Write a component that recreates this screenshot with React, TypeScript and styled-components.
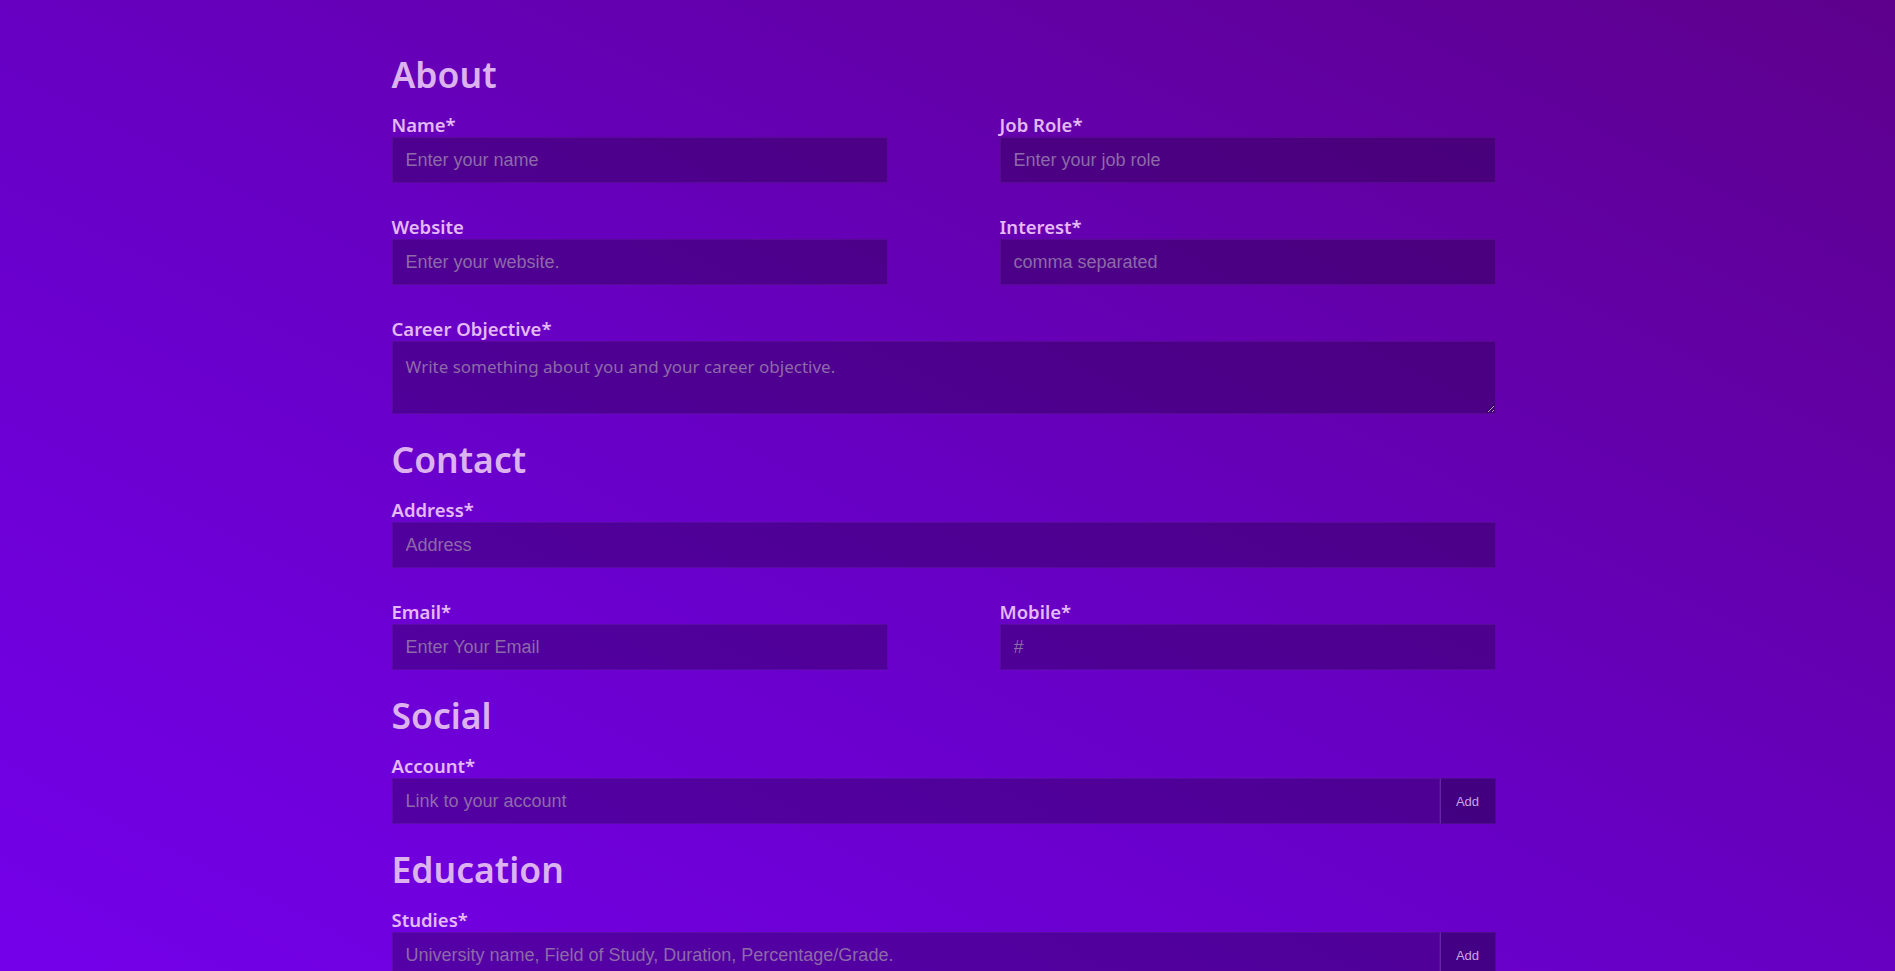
import React from 'react';
import styled, { createGlobalStyle } from 'styled-components';

const GlobalStyle = createGlobalStyle`
  html, body {
    margin: 0;
    padding: 0;
    min-height: 100%;
  }
  body {
    min-height: 100vh;
    background: linear-gradient(to top right, #7400ea 0%, #6800c6 45%, #5e008c 100%);
    background-attachment: fixed;
    font-family: "Noto Sans", "Open Sans", sans-serif;
  }
`;

const Page = styled.div`
  width: 1104px;
  margin-left: calc(50% - 556px);
  padding: 51px 0 40px;
`;

const Section = styled.section`
  margin-bottom: 22px;
`;

const SectionTitle = styled.h2`
  margin: 0 0 16px;
  font-size: 35.5px;
  line-height: 46px;
  font-weight: 600;
  color: #dcb3ef;
`;

const Row = styled.div<{ $cols?: number }>`
  display: grid;
  grid-template-columns: ${(p) => (p.$cols === 2 ? '1fr 1fr' : '1fr')};
  column-gap: 112px;
  & + & {
    margin-top: 32px;
  }
`;

const Field = styled.div`
  display: flex;
  flex-direction: column;
`;

const Label = styled.label`
  font-size: 18.5px;
  line-height: 24px;
  font-weight: 600;
  color: #e4b9f6;
`;

const inputBase = `
  box-sizing: border-box;
  width: 100%;
  margin: 0;
  border: 1px solid rgba(140, 60, 200, 0.18);
  background: rgba(24, 0, 46, 0.32);
  color: #e4c8f4;
  outline: none;
  border-radius: 0;
`;

const TextInput = styled.input`
  ${inputBase}
  height: 46px;
  padding: 0 13px;
  font-family: "Liberation Sans", Arial, sans-serif;
  font-size: 18px;
  &::placeholder {
    color: #8d6aa8;
  }
`;

const TextArea = styled.textarea`
  ${inputBase}
  display: block;
  height: 73px;
  padding: 13px 13px 10px;
  font-family: "Noto Sans", "Open Sans", sans-serif;
  font-size: 17px;
  line-height: 24px;
  &::placeholder {
    color: #8d6aa8;
  }
`;

const InputGroup = styled.div`
  display: flex;
`;

const AddButton = styled.button`
  flex: 0 0 56px;
  height: 46px;
  border: 1px solid rgba(140, 60, 200, 0.18);
  border-left: 1px solid rgba(150, 80, 210, 0.45);
  background: rgba(10, 0, 30, 0.4);
  color: #c9a6e2;
  font-family: "Liberation Sans", Arial, sans-serif;
  font-size: 13px;
  cursor: pointer;
`;

type FieldProps = { label: string; placeholder: string };

const InputField: React.FC<FieldProps> = ({ label, placeholder }) => (
  <Field>
    <Label>{label}</Label>
    <TextInput placeholder={placeholder} />
  </Field>
);

const AddField: React.FC<FieldProps> = ({ label, placeholder }) => (
  <Field>
    <Label>{label}</Label>
    <InputGroup>
      <TextInput placeholder={placeholder} />
      <AddButton type="button">Add</AddButton>
    </InputGroup>
  </Field>
);

const App: React.FC = () => {
  return (
    <>
      <GlobalStyle />
      <Page>
        <Section>
          <SectionTitle>About</SectionTitle>
          <Row $cols={2}>
            <InputField label="Name*" placeholder="Enter your name" />
            <InputField label="Job Role*" placeholder="Enter your job role" />
          </Row>
          <Row $cols={2}>
            <InputField label="Website" placeholder="Enter your website." />
            <InputField label="Interest*" placeholder="comma separated" />
          </Row>
          <Row>
            <Field>
              <Label>Career Objective*</Label>
              <TextArea placeholder="Write something about you and your career objective." />
            </Field>
          </Row>
        </Section>

        <Section>
          <SectionTitle>Contact</SectionTitle>
          <Row>
            <InputField label="Address*" placeholder="Address" />
          </Row>
          <Row $cols={2}>
            <InputField label="Email*" placeholder="Enter Your Email" />
            <InputField label="Mobile*" placeholder="#" />
          </Row>
        </Section>

        <Section>
          <SectionTitle>Social</SectionTitle>
          <Row>
            <AddField label="Account*" placeholder="Link to your account" />
          </Row>
        </Section>

        <Section>
          <SectionTitle>Education</SectionTitle>
          <Row>
            <AddField
              label="Studies*"
              placeholder="University name, Field of Study, Duration, Percentage/Grade."
            />
          </Row>
        </Section>
      </Page>
    </>
  );
};

export default App;
